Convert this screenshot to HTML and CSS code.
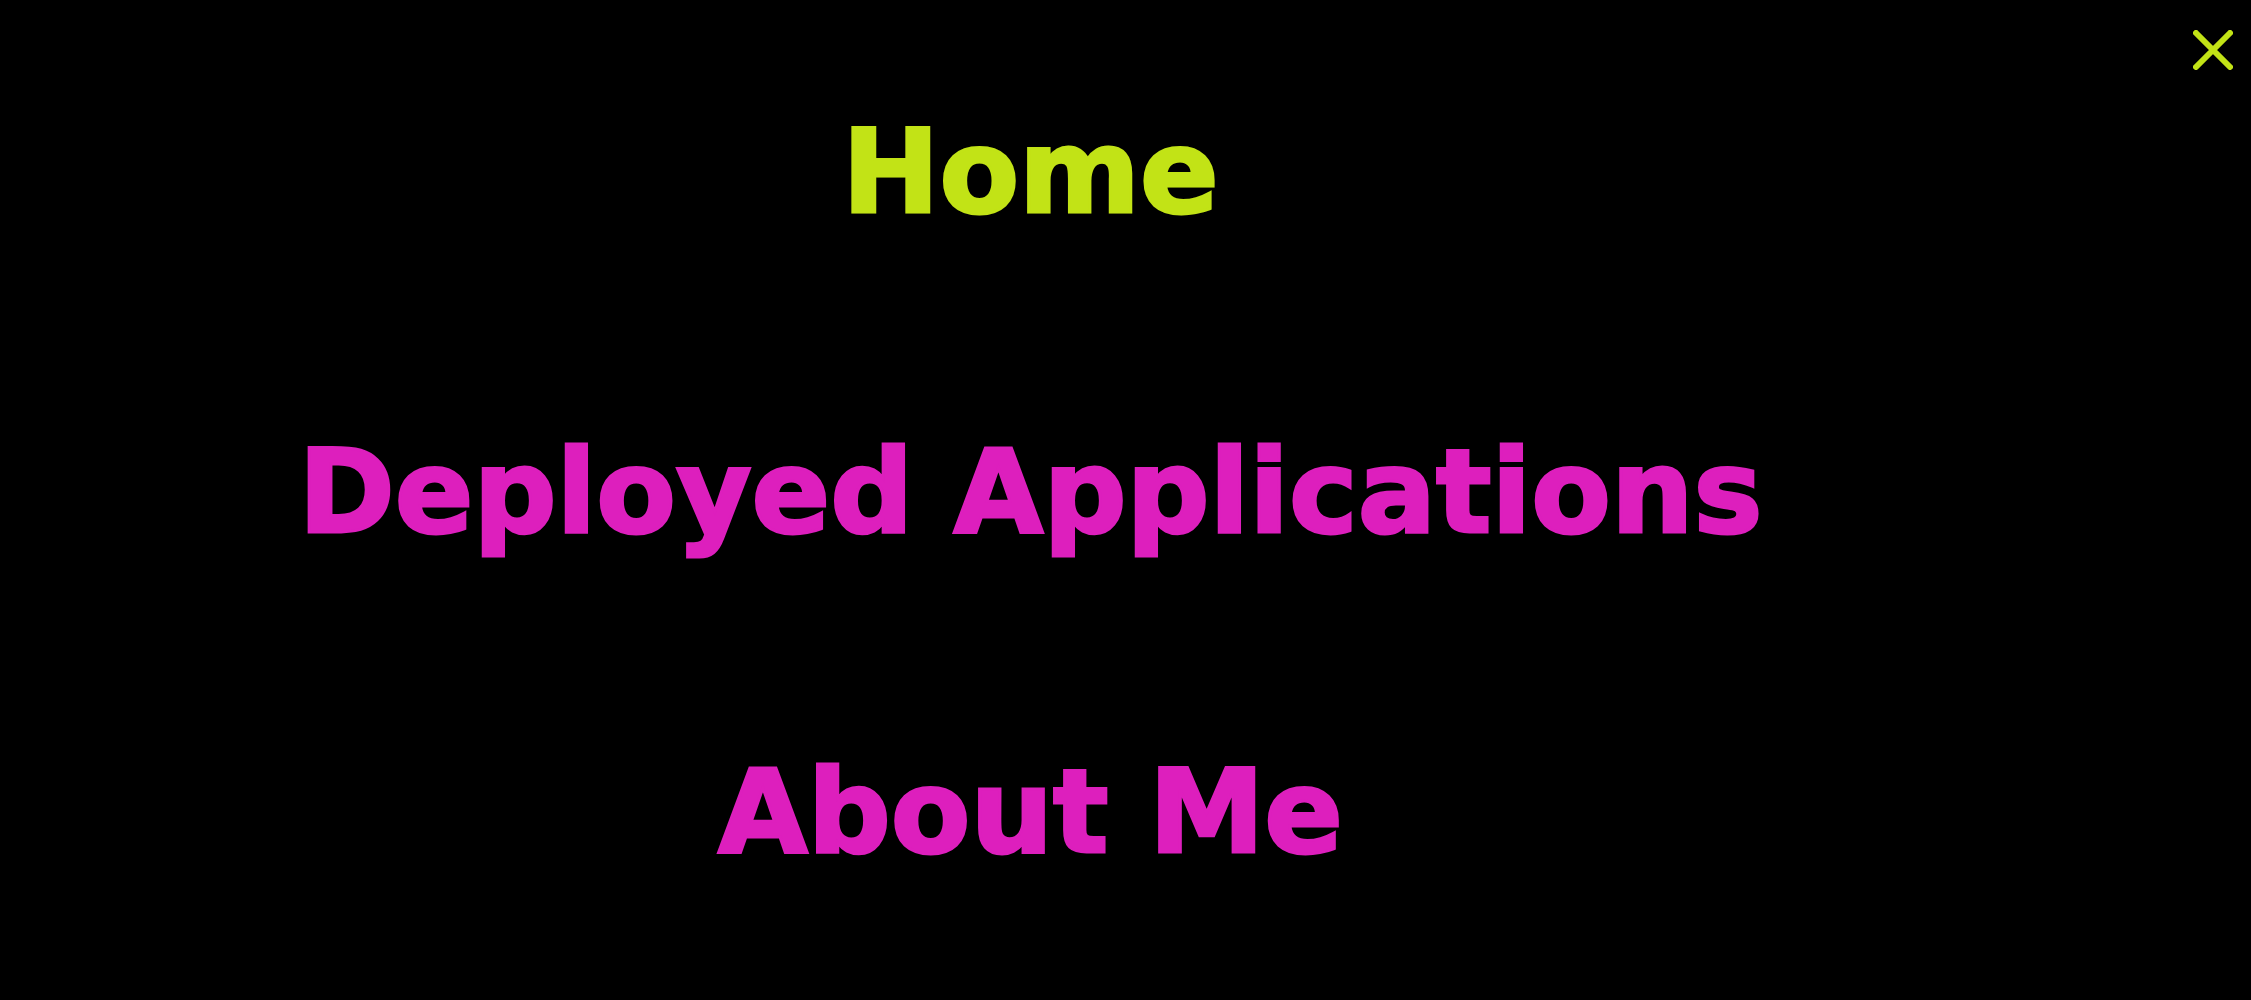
FILE: index.html
```html
<!DOCTYPE html>
<html lang="en">
<head>
<meta charset="utf-8">
<meta name="viewport" content="width=device-width, initial-scale=1">
<title>Menu</title>
<link rel="stylesheet" href="styles.css">
</head>
<body>
<nav class="menu" aria-label="Main">
  <ul class="menu-list">
    <li><a class="menu-link active" href="#home" aria-current="page">Home</a></li>
    <li><a class="menu-link" href="#applications">Deployed Applications</a></li>
    <li><a class="menu-link" href="#about">About Me</a></li>
  </ul>
  <button class="menu-close" type="button" aria-label="Close menu">
    <svg viewBox="0 0 40 40" width="40" height="40" aria-hidden="true">
      <path d="M3 3 37 37M37 3 3 37" fill="none" stroke="currentColor" stroke-width="6" stroke-linecap="round"/>
    </svg>
  </button>
</nav>
</body>
</html>
```
FILE: styles.css
```css
* {
  box-sizing: border-box;
}

body {
  margin: 0;
  background: #000;
  color: #dd1fbd;
  font-family: "Arial Black", "DejaVu Sans", sans-serif;
}

.menu {
  display: flex;
  align-items: flex-start;
  min-height: 100vh;
}

.menu-list {
  flex: 1;
  margin: 0;
  padding: 12px 0 0;
  list-style: none;
  text-align: center;
}

.menu-list li {
  padding: 80px 0;
}

.menu-link {
  display: block;
  color: inherit;
  font-size: 116px;
  font-weight: 900;
  line-height: 160px;
  text-decoration: none;
  -webkit-text-stroke: 3px currentColor;
}

.menu-link.active,
.menu-close {
  color: #c2e316;
}

.menu-close {
  display: flex;
  justify-content: flex-end;
  width: 190px;
  padding: 30px 18px;
  border: 0;
  background: none;
  cursor: pointer;
}
```
